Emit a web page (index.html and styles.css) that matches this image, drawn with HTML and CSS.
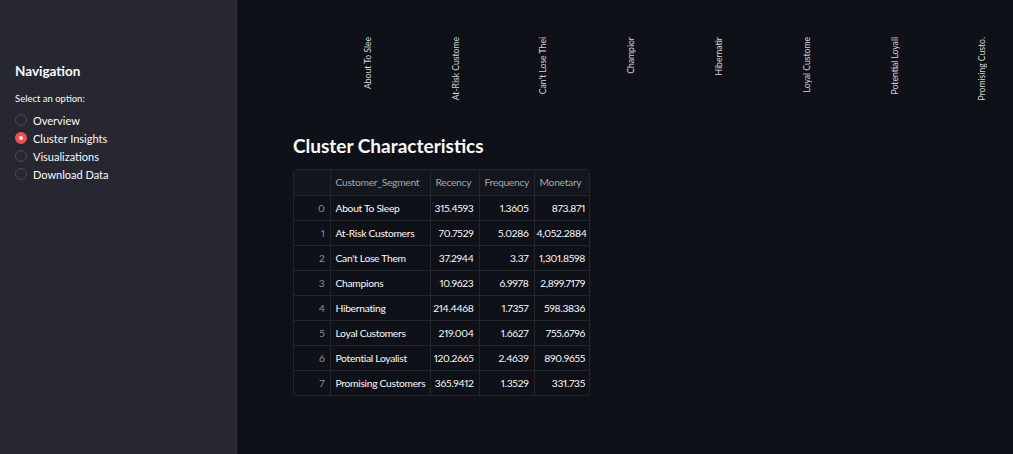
FILE: index.html
```html
<!DOCTYPE html>
<html>
<head>
<meta charset="utf-8">
<link rel="stylesheet" href="styles.css">
</head>
<body>
<div class="app">
  <aside class="sidebar">
    <h2 class="nav-title">Navigation</h2>
    <div class="radio-label">Select an option:</div>
    <ul class="radio-group">
      <li class="radio"><span class="dot"></span>Overview</li>
      <li class="radio checked"><span class="dot"></span>Cluster Insights</li>
      <li class="radio"><span class="dot"></span>Visualizations</li>
      <li class="radio"><span class="dot"></span>Download Data</li>
    </ul>
  </aside>
  <main class="main">
    <div class="axis-labels">
      <div class="axis-cell"><span class="axis-text">About To Slee</span></div>
      <div class="axis-cell"><span class="axis-text">At-Risk Custome</span></div>
      <div class="axis-cell"><span class="axis-text">Can't Lose Thei</span></div>
      <div class="axis-cell"><span class="axis-text">Champior</span></div>
      <div class="axis-cell"><span class="axis-text">Hibernatir</span></div>
      <div class="axis-cell"><span class="axis-text">Loyal Custome</span></div>
      <div class="axis-cell"><span class="axis-text">Potential Loyali</span></div>
      <div class="axis-cell"><span class="axis-text">Promising Custo.</span></div>
    </div>
    <h3 class="section-title">Cluster Characteristics</h3>
    <div class="table-wrap">
      <table class="df">
        <colgroup>
          <col class="c-idx"><col class="c-seg"><col class="c-rec"><col class="c-freq"><col class="c-mon">
        </colgroup>
        <thead>
          <tr><th></th><th class="left">Customer_Segment</th><th class="left">Recency</th><th class="left">Frequency</th><th class="left">Monetary</th></tr>
        </thead>
        <tbody>
          <tr><td class="idx">0</td><td class="left">About To Sleep</td><td>315.4593</td><td>1.3605</td><td>873.871</td></tr>
          <tr><td class="idx">1</td><td class="left">At-Risk Customers</td><td>70.7529</td><td>5.0286</td><td>4,052.2884</td></tr>
          <tr><td class="idx">2</td><td class="left">Can't Lose Them</td><td>37.2944</td><td>3.37</td><td>1,301.8598</td></tr>
          <tr><td class="idx">3</td><td class="left">Champions</td><td>10.9623</td><td>6.9978</td><td>2,899.7179</td></tr>
          <tr><td class="idx">4</td><td class="left">Hibernating</td><td>214.4468</td><td>1.7357</td><td>598.3836</td></tr>
          <tr><td class="idx">5</td><td class="left">Loyal Customers</td><td>219.004</td><td>1.6627</td><td>755.6796</td></tr>
          <tr><td class="idx">6</td><td class="left">Potential Loyalist</td><td>120.2665</td><td>2.4639</td><td>890.9655</td></tr>
          <tr><td class="idx">7</td><td class="left">Promising Customers</td><td>365.9412</td><td>1.3529</td><td>331.735</td></tr>
        </tbody>
      </table>
    </div>
  </main>
</div>
</body>
</html>
```
FILE: styles.css
```css
* { box-sizing: border-box; }
html, body { margin: 0; padding: 0; height: 100%; }
body {
  background: #0e1117;
  color: #fafafa;
  font-family: Lato, "Noto Sans", sans-serif;
}
.app { display: flex; height: 454px; overflow: hidden; }
.sidebar {
  width: 237px;
  flex: none;
  background: #262730;
  border-right: 1px solid #30313a;
  padding: 62px 15px 0 15px;
}
.nav-title {
  margin: 0 0 12px 0;
  font-size: 13.5px;
  font-weight: 700;
  line-height: 18px;
}
.radio-label {
  font-size: 9.5px;
  line-height: 14px;
  margin-bottom: 5px;
  color: #fafafa;
}
.radio-group { list-style: none; margin: 0; padding: 0; }
.radio {
  display: flex;
  align-items: center;
  height: 18px;
  font-size: 11px;
  gap: 6px;
}
.dot {
  width: 12px; height: 12px;
  border-radius: 50%;
  border: 1px solid #4a4b55;
  background: #262730;
  flex: none;
}
.radio.checked .dot {
  background: #ff4b4b;
  border: 3px solid #ff4b4b;
  position: relative;
}
.radio.checked .dot::after {
  content: "";
  position: absolute;
  left: 1px; top: 1px;
  width: 4px; height: 4px;
  border-radius: 50%;
  background: #fff;
}
.main {
  flex: 1;
  padding: 0 0 0 56px;
}
.axis-labels {
  display: flex;
  margin-left: 31px;
  padding-top: 37px;
  height: 100px;
}
.axis-cell {
  width: 87.8px;
  flex: none;
  display: flex;
  justify-content: center;
  align-items: flex-start;
}
.axis-text {
  writing-mode: vertical-rl;
  transform: rotate(180deg);
  font-size: 8.6px;
  color: #d6d6d8;
  white-space: nowrap;
}
.section-title {
  margin: 33px 0 0 0;
  font-size: 19px;
  font-weight: 700;
  line-height: 26px;
}
.table-wrap {
  margin-top: 10px;
  width: 297px;
  border: 1px solid #24262d;
  border-radius: 4px;
  overflow: hidden;
}
.df {
  border-collapse: collapse;
  table-layout: fixed;
  width: 296px;
  font-size: 10.3px;
}
.c-idx { width: 36px; }
.c-seg { width: 100px; }
.c-rec { width: 49px; }
.c-freq { width: 55px; }
.c-mon { width: 56px; }
.df th, .df td {
  height: 25px;
  padding: 0 5px 0 2px;
  border-right: 1px solid #24262d;
  border-bottom: 1px solid #24262d;
  text-align: right;
  white-space: nowrap;
  overflow: hidden;
  letter-spacing: -0.3px;
  font-variant-numeric: proportional-nums;
}
.df th:last-child, .df td:last-child { border-right: none; }
.df tbody tr:last-child td { border-bottom: none; }
.df th {
  font-weight: 400;
  color: #a3a6ae;
  background: #13161d;
}
.df .left { text-align: left; padding-left: 5px; padding-right: 0; letter-spacing: -0.3px; }
.df .idx { color: #8d9099; background: #0e1117; }
```
